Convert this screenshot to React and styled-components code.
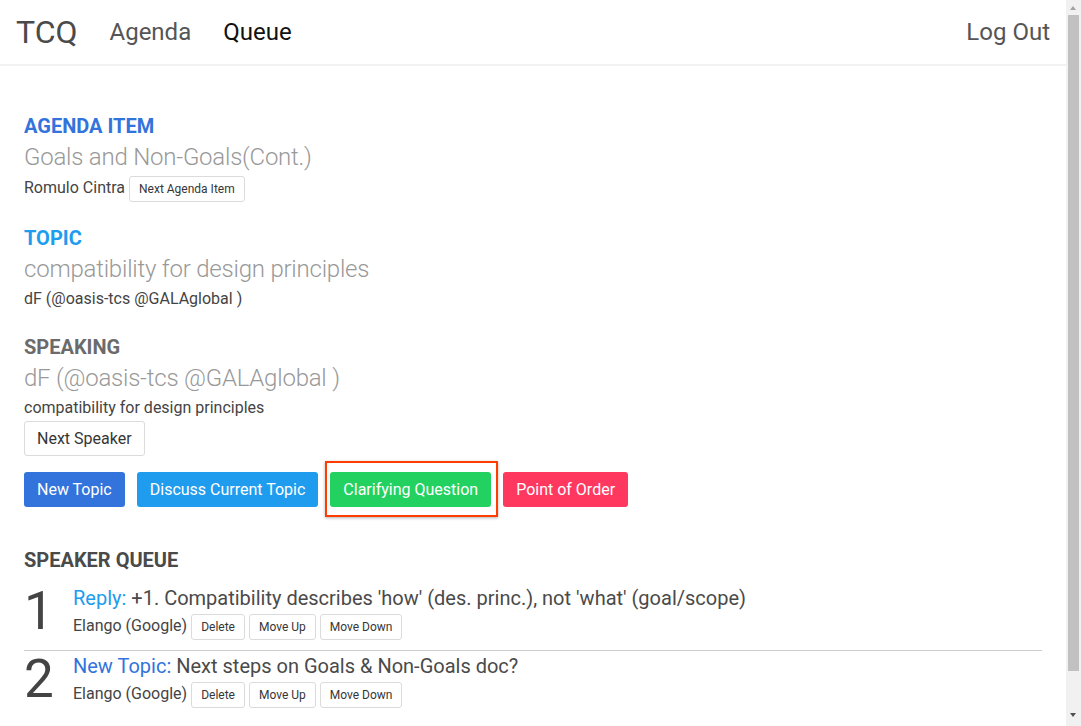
import React from 'react';
import styled, { createGlobalStyle } from 'styled-components';

const GlobalStyle = createGlobalStyle`
  body {
    margin: 0;
    font-family: Roboto, "Liberation Sans", sans-serif;
    color: #4a4a4a;
    background: #fff;
  }
  * {
    box-sizing: border-box;
  }
`;

const Page = styled.div`
  margin-right: 15px;
`;

// the browser's scrollbar, as it shows in the capture
const ScrollTrack = styled.div`
  position: fixed;
  top: 0;
  right: 0;
  bottom: 0;
  width: 15px;
  background: #f1f1f1;

  &::before,
  &::after {
    content: '';
    position: absolute;
    left: 4px;
    border-left: 3.5px solid transparent;
    border-right: 3.5px solid transparent;
  }

  &::before {
    top: 6px;
    border-bottom: 4px solid #a3a3a3;
  }

  &::after {
    bottom: 9px;
    border-top: 4px solid #505050;
  }
`;

const ScrollThumb = styled.div`
  position: absolute;
  top: 15px;
  left: 2px;
  width: 11px;
  height: 656px;
  background: #c1c1c1;
`;

const Navbar = styled.nav`
  display: flex;
  align-items: center;
  height: 66px;
  padding: 0 16px;
  border-bottom: 2px solid #f1f1f1;
  gap: 32px;
`;

const Brand = styled.div`
  font-size: 32px;
  color: #4a4a4a;
`;

const NavLink = styled.a`
  font-size: 24px;
  color: ${(p) => (p.$active ? '#111' : '#555')};
  text-decoration: none;
  margin-left: ${(p) => (p.$right ? 'auto' : '0')};
  cursor: pointer;
`;

const Main = styled.main`
  padding: 48px 24px 52px;
`;

const Section = styled.section`
  margin-bottom: ${(p) => p.$after ?? 24}px;
`;

const Label = styled.h2`
  margin: 0;
  font-size: 20px;
  line-height: 24px;
  font-weight: 700;
  color: ${(p) => p.$color};
`;

const Title = styled.div`
  margin-top: 5px;
  font-size: 24px;
  line-height: 28px;
  font-weight: 300;
  letter-spacing: -0.22px;
  color: #999;
`;

const MetaRow = styled.div`
  display: flex;
  align-items: baseline;
  gap: 4px;
  margin-top: ${(p) => p.$top ?? 5}px;
`;

const MetaText = styled.span`
  font-size: 16px;
  line-height: 22px;
  color: #444;
`;

const SmallButton = styled.button`
  display: inline-block;
  height: 26px;
  line-height: 24px;
  padding: 0 9px;
  font-family: inherit;
  font-size: 12px;
  color: #363636;
  background: #fff;
  border: 1px solid #dbdbdb;
  border-radius: 3px;
  cursor: pointer;
`;

const Button = styled.button`
  display: inline-block;
  height: 35px;
  line-height: 33px;
  padding: 0 12px;
  margin-top: 2px;
  font-family: inherit;
  font-size: 16px;
  color: #363636;
  background: #fff;
  border: 1px solid #dbdbdb;
  border-radius: 3px;
  cursor: pointer;
`;

const ActionRow = styled.div`
  display: flex;
  gap: 12px;
  margin-top: 16px;
`;

const ActionButton = styled.button`
  height: 35px;
  line-height: 33px;
  padding: 0 12px;
  font-family: inherit;
  font-size: 16px;
  color: #fff;
  background: ${(p) => p.$bg};
  border: 1px solid transparent;
  border-radius: 3px;
  cursor: pointer;
`;

const Highlight = styled.div`
  position: relative;
  display: flex;

  &::after {
    content: '';
    position: absolute;
    inset: -11px -7px -10px -5px;
    border: 2px solid #ff3d00;
    box-shadow: 0 1px 3px rgba(0, 0, 0, 0.3);
    pointer-events: none;
  }
`;

const QueueHeading = styled.h2`
  margin: 41px 0 0;
  font-size: 20px;
  line-height: 24px;
  font-weight: 700;
  color: #4a4a4a;
`;

const QueueList = styled.ol`
  list-style: none;
  margin: 11px 0 0;
  padding: 0;
`;

const QueueItem = styled.li`
  display: flex;
  padding: 3px 0 10px;
  border-bottom: 1px solid #ccc;

  &:last-child {
    border-bottom: none;
  }
`;

const Position = styled.div`
  width: 49px;
  flex: none;
  font-size: 53px;
  line-height: 50px;
  color: #444;
`;

const ItemBody = styled.div`
  flex: 1;
`;

const ItemTitle = styled.div`
  font-size: 20px;
  line-height: 24px;
  color: #4a4a4a;
`;

const TypeLabel = styled.span`
  color: ${(p) => p.$color};
`;

const queue = [
  {
    type: 'Reply',
    color: '#209cee',
    text: "+1. Compatibility describes 'how' (des. princ.), not 'what' (goal/scope)",
    who: 'Elango (Google)',
  },
  {
    type: 'New Topic',
    color: '#3273dc',
    text: 'Next steps on Goals & Non-Goals doc?',
    who: 'Elango (Google)',
  },
];

export default function App() {
  return (
    <>
      <GlobalStyle />
      <Page>
        <Navbar>
          <Brand>TCQ</Brand>
          <NavLink>Agenda</NavLink>
          <NavLink $active>Queue</NavLink>
          <NavLink $right>Log Out</NavLink>
        </Navbar>
        <Main>
          <Section>
            <Label $color="#3273dc">AGENDA ITEM</Label>
            <Title>Goals and Non-Goals(Cont.)</Title>
            <MetaRow>
              <MetaText>Romulo Cintra</MetaText>
              <SmallButton>Next Agenda Item</SmallButton>
            </MetaRow>
          </Section>

          <Section $after={25}>
            <Label $color="#209cee">TOPIC</Label>
            <Title>compatibility for design principles</Title>
            <MetaRow>
              <MetaText>dF (@oasis-tcs @GALAglobal )</MetaText>
            </MetaRow>
          </Section>

          <div>
            <Label $color="#6b6b6b">SPEAKING</Label>
            <Title>dF (@oasis-tcs @GALAglobal )</Title>
            <MetaRow>
              <MetaText>compatibility for design principles</MetaText>
            </MetaRow>
            <Button>Next Speaker</Button>
          </div>

          <ActionRow>
            <ActionButton $bg="#3273dc">New Topic</ActionButton>
            <ActionButton $bg="#209cee">Discuss Current Topic</ActionButton>
            <Highlight>
              <ActionButton $bg="#23d160">Clarifying Question</ActionButton>
            </Highlight>
            <ActionButton $bg="#ff3860">Point of Order</ActionButton>
          </ActionRow>

          <QueueHeading>SPEAKER QUEUE</QueueHeading>
          <QueueList>
            {queue.map((item, i) => (
              <QueueItem key={i}>
                <Position>{i + 1}</Position>
                <ItemBody>
                  <ItemTitle>
                    <TypeLabel $color={item.color}>{item.type}:</TypeLabel> {item.text}
                  </ItemTitle>
                  <MetaRow $top={4}>
                    <MetaText>{item.who}</MetaText>
                    <SmallButton>Delete</SmallButton>
                    <SmallButton>Move Up</SmallButton>
                    <SmallButton>Move Down</SmallButton>
                  </MetaRow>
                </ItemBody>
              </QueueItem>
            ))}
          </QueueList>
        </Main>
      </Page>
      <ScrollTrack>
        <ScrollThumb />
      </ScrollTrack>
    </>
  );
}
